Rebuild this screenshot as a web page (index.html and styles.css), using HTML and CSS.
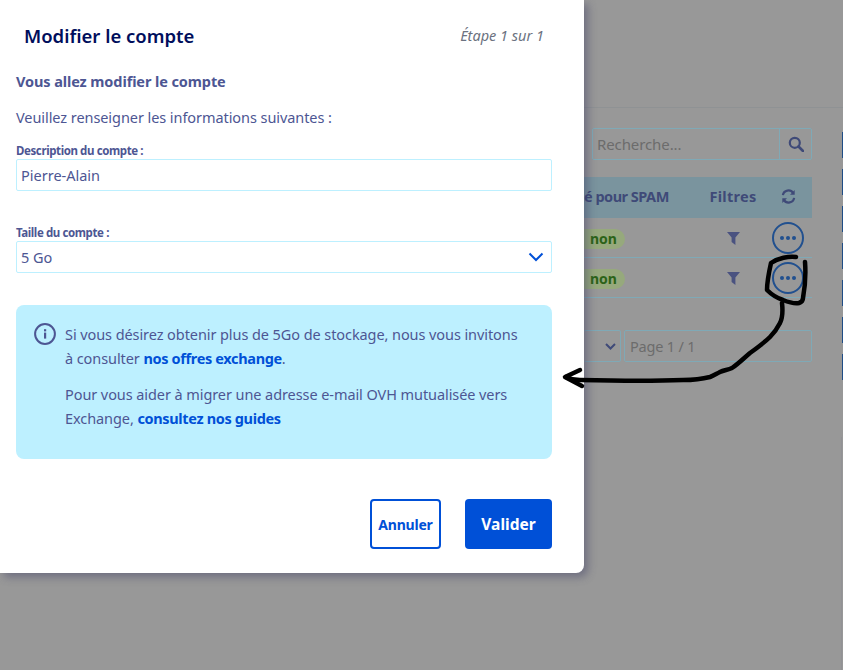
FILE: index.html
```html
<!DOCTYPE html>
<html lang="fr">
<head>
    <meta charset="UTF-8">
    <title>Modifier le compte</title>
    <link rel="stylesheet" href="styles.css">
</head>
<body>
    <div class="page">
        <div class="side-marks">
            <span></span><span></span><span></span><span></span><span></span><span></span><span></span>
        </div>
        <div class="side-edge"></div>
        <div class="content">
            <div class="search">
                <span class="search-input">Recherche...</span>
                <span class="search-btn">
                    <svg width="16" height="16" viewBox="0 0 16 16"><circle cx="6.8" cy="6.8" r="5" fill="none" stroke="currentColor" stroke-width="2.2"/><path d="M10.5 10.5 15 15" stroke="currentColor" stroke-width="2.6" stroke-linecap="round"/></svg>
                </span>
            </div>
            <div class="table-head">
                <span class="col-spam">é pour SPAM</span>
                <span class="col-filter">Filtres</span>
                <span class="col-action">
                    <svg width="15" height="15" viewBox="0 0 16 16" fill="none" stroke="currentColor" stroke-width="2.4"><path d="M2 6.6A6 6 0 0 1 13 4.4"/><path d="M14 9.4A6 6 0 0 1 3 11.6"/><path d="M14.6 1v5.2H9.6z" fill="currentColor" stroke="none"/><path d="M1.4 15V9.8h5z" fill="currentColor" stroke="none"/></svg>
                </span>
            </div>
            <div class="table-row">
                <span class="col-spam"><span class="badge">non</span></span>
                <span class="col-filter"><svg class="funnel" width="13" height="13" viewBox="0 0 13 13"><path d="M0 0h13L8.4 5.6V13L4.6 10V5.6z"/></svg></span>
                <span class="col-action"><span class="dots-btn"><i></i><i></i><i></i></span></span>
            </div>
            <div class="table-row">
                <span class="col-spam"><span class="badge">non</span></span>
                <span class="col-filter"><svg class="funnel" width="13" height="13" viewBox="0 0 13 13"><path d="M0 0h13L8.4 5.6V13L4.6 10V5.6z"/></svg></span>
                <span class="col-action"><span class="dots-btn"><i></i><i></i><i></i></span></span>
            </div>
            <div class="pager">
                <span class="pager-size">
                    <svg width="11" height="7" viewBox="0 0 11 7" fill="none" stroke="currentColor" stroke-width="2"><path d="M1 1l4.5 4.5L10 1"/></svg>
                </span>
                <span class="pager-page">Page 1 / 1</span>
            </div>
        </div>
    </div>

    <div class="modal">
        <div class="modal-head">
            <h1>Modifier le compte</h1>
            <span class="step">Étape 1 sur 1</span>
        </div>
        <p class="intro"><strong>Vous allez modifier le compte</strong></p>
        <p class="intro-sub">Veuillez renseigner les informations suivantes :</p>

        <label class="field-label">Description du compte :</label>
        <div class="field">Pierre-Alain</div>

        <label class="field-label second">Taille du compte :</label>
        <div class="field field-select">
            5 Go
            <svg width="16" height="10" viewBox="0 0 16 10" fill="none" stroke="#0050d7" stroke-width="2"><path d="M1.5 1.5 8 8l6.5-6.5"/></svg>
        </div>

        <div class="notice">
            <svg class="notice-icon" width="22" height="22" viewBox="0 0 22 22"><circle cx="11" cy="11" r="9.9" fill="none" stroke="currentColor" stroke-width="2"/><rect x="10" y="9.6" width="2.2" height="6" fill="currentColor"/><rect x="10" y="6.2" width="2.2" height="2.2" fill="currentColor"/></svg>
            <div class="notice-text">
                <p>Si vous désirez obtenir plus de 5Go de stockage, nous vous invitons<br>à consulter <a href="#">nos offres exchange</a>.</p>
                <p>Pour vous aider à migrer une adresse e-mail OVH mutualisée vers<br>Exchange, <a href="#">consultez nos guides</a></p>
            </div>
        </div>

        <div class="actions">
            <button class="btn btn-ghost">Annuler</button>
            <button class="btn btn-primary">Valider</button>
        </div>
    </div>

    <!-- marker drawn over the screenshot -->
    <svg class="scribble" width="843" height="670" viewBox="0 0 843 670" fill="none" stroke="#000" stroke-width="4.5" stroke-linecap="round" stroke-linejoin="round">
        <path d="M796 257C789 256 778 258 771 263C769 272 767 282 767 290C772 295 777 298 783 300C788 302 795 304 799 303C802 302 803 300 803 298C805 287 806 275 805 262"/>
        <path d="M782 303C783 312 782 319 780 323C777 329 774 333 770 337C764 343 757 348 750 353C744 358 738 364 732 368C728 370 724 370 720 372C716 374 713 376 710 377C702 379 692 380 683 380C660 381 620 381 580 380C575 380 570 379 566 377"/>
        <path d="M580 370 565 377 582 386"/>
    </svg>
</body>
</html>
```

FILE: styles.css
```css
* {
    margin: 0;
    padding: 0;
    box-sizing: border-box;
}

body {
    width: 843px;
    height: 670px;
    overflow: hidden;
    position: relative;
    font-family: "Noto Sans", sans-serif;
    background-color: #989898;
    color: #4d5693;
}

/* page behind the dialog */
.page {
    height: 670px;
    padding-top: 107px;
}

.content {
    border-top: 1px solid #8f9294;
    margin-left: 584px;
    width: 259px;
    padding: 20px 31px 0 0;
}

.side-marks {
    position: absolute;
    right: 0;
    top: 132px;
    display: flex;
    flex-direction: column;
    gap: 11px;
}

.side-marks span {
    display: block;
    width: 1px;
    height: 26px;
    background-color: #1f4d86;
}

.side-edge {
    position: absolute;
    right: 1px;
    top: 437px;
    bottom: 0;
    width: 1px;
    background-color: #929296;
}

.search {
    display: flex;
    height: 32px;
    margin-left: 8px;
    margin-bottom: 17px;
    border: 1px solid #7fa9b6;
    border-radius: 2px;
}

.search-input {
    flex: 1;
    padding-left: 4px;
    font-size: 15px;
    letter-spacing: -0.1px;
    line-height: 30px;
    color: #6c6c6c;
}

.search-btn {
    width: 32px;
    display: flex;
    align-items: center;
    justify-content: center;
    border-left: 1px solid #7fa9b6;
    color: #3f4a78;
}

.table-head,
.table-row {
    display: flex;
    align-items: center;
}

.table-head {
    height: 41px;
    padding-bottom: 3px;
    background-color: #7a949e;
    font-size: 14.5px;
    font-weight: 700;
    color: #3f4a78;
}

.table-head .col-spam {
    letter-spacing: -0.5px;
}

.table-head .col-filter {
    letter-spacing: 0.3px;
}

.table-row {
    height: 40px;
    border-bottom: 1px solid #7fa9b6;
}

.col-spam {
    width: 118px;
    white-space: nowrap;
    overflow: hidden;
}

.col-filter {
    width: 62px;
    display: flex;
    justify-content: center;
}

.col-action {
    flex: 1;
    display: flex;
    justify-content: center;
}

.badge {
    display: inline-block;
    height: 20px;
    width: 41px;
    padding-left: 6px;
    border-radius: 0 10px 10px 0;
    background-color: #96a97c;
    color: #2c6318;
    font-size: 14px;
    font-weight: 700;
    line-height: 20px;
}

.funnel {
    fill: #4a5280;
    margin-top: 2px;
}

.dots-btn {
    width: 32px;
    height: 32px;
    border: 2px solid #21508f;
    border-radius: 50%;
    display: flex;
    align-items: center;
    justify-content: center;
    gap: 2px;
}

.dots-btn i {
    width: 4px;
    height: 4px;
    border-radius: 50%;
    background-color: #21508f;
}

.pager {
    display: flex;
    gap: 3px;
    margin-top: 32px;
    height: 32px;
}

.pager-size {
    width: 37px;
    display: flex;
    align-items: center;
    justify-content: flex-end;
    padding-right: 4px;
    border: 1px solid #7fa9b6;
    border-left: none;
    border-radius: 2px;
    color: #3f4a78;
}

.pager-page {
    flex: 1;
    padding-left: 5px;
    font-size: 14.5px;
    letter-spacing: -0.2px;
    line-height: 30px;
    color: #6c6c6c;
    border: 1px solid #7fa9b6;
    border-radius: 2px;
}

/* dialog */
.modal {
    position: absolute;
    left: 0;
    top: 0;
    width: 584px;
    height: 573px;
    padding: 0 32px 0 16px;
    background: #fff;
    border-radius: 0 0 8px 0;
    box-shadow: 4px 4px 8px rgba(60, 60, 100, 0.45);
}

.modal-head {
    display: flex;
    justify-content: space-between;
    align-items: center;
    height: 70px;
    padding: 0 8px;
}

.modal-head h1 {
    font-size: 18.5px;
    font-weight: 600;
    color: #000e5c;
}

.step {
    font-size: 14.5px;
    font-style: italic;
    color: #6b7280;
}

.intro {
    font-size: 14.5px;
    letter-spacing: -0.1px;
    line-height: 22px;
    margin-bottom: 14px;
}

.intro-sub {
    font-size: 14.5px;
    letter-spacing: -0.07px;
    line-height: 22px;
    margin-bottom: 14px;
}

.field-label {
    display: block;
    font-size: 11.5px;
    letter-spacing: -0.4px;
    font-weight: 700;
    line-height: 17px;
}

.field-label.second {
    margin-top: 33px;
}

.field {
    height: 32px;
    padding: 0 4px;
    border: 1px solid #bdf0ff;
    border-radius: 2px;
    font-size: 14.5px;
    line-height: 30px;
}

.field-select {
    display: flex;
    align-items: center;
    justify-content: space-between;
    padding-right: 7px;
}

.notice {
    display: flex;
    gap: 9px;
    height: 154px;
    margin-top: 32px;
    padding: 17px 24px 0 18px;
    background-color: #bdf0ff;
    border-radius: 8px;
}

.notice-icon {
    flex: none;
    margin-top: 1px;
}

.notice-text {
    font-size: 14.5px;
    letter-spacing: -0.08px;
    line-height: 24px;
    white-space: nowrap;
}

.notice-text p + p {
    margin-top: 12px;
}

.notice-text a {
    color: #0050d7;
    font-weight: 700;
    letter-spacing: -0.35px;
    text-decoration: none;
}

.actions {
    display: flex;
    justify-content: flex-end;
    gap: 24px;
    margin-top: 40px;
}

.btn {
    height: 50px;
    border-radius: 4px;
    font-family: inherit;
    font-weight: 700;
}

.btn-ghost {
    width: 71px;
    background: #fff;
    border: 2px solid #0050d7;
    color: #0050d7;
    font-size: 14px;
    letter-spacing: -0.2px;
}

.btn-primary {
    width: 87px;
    background: #0050d7;
    border: none;
    color: #fff;
    font-size: 15.5px;
}

.scribble {
    position: absolute;
    left: 0;
    top: 0;
}
```
